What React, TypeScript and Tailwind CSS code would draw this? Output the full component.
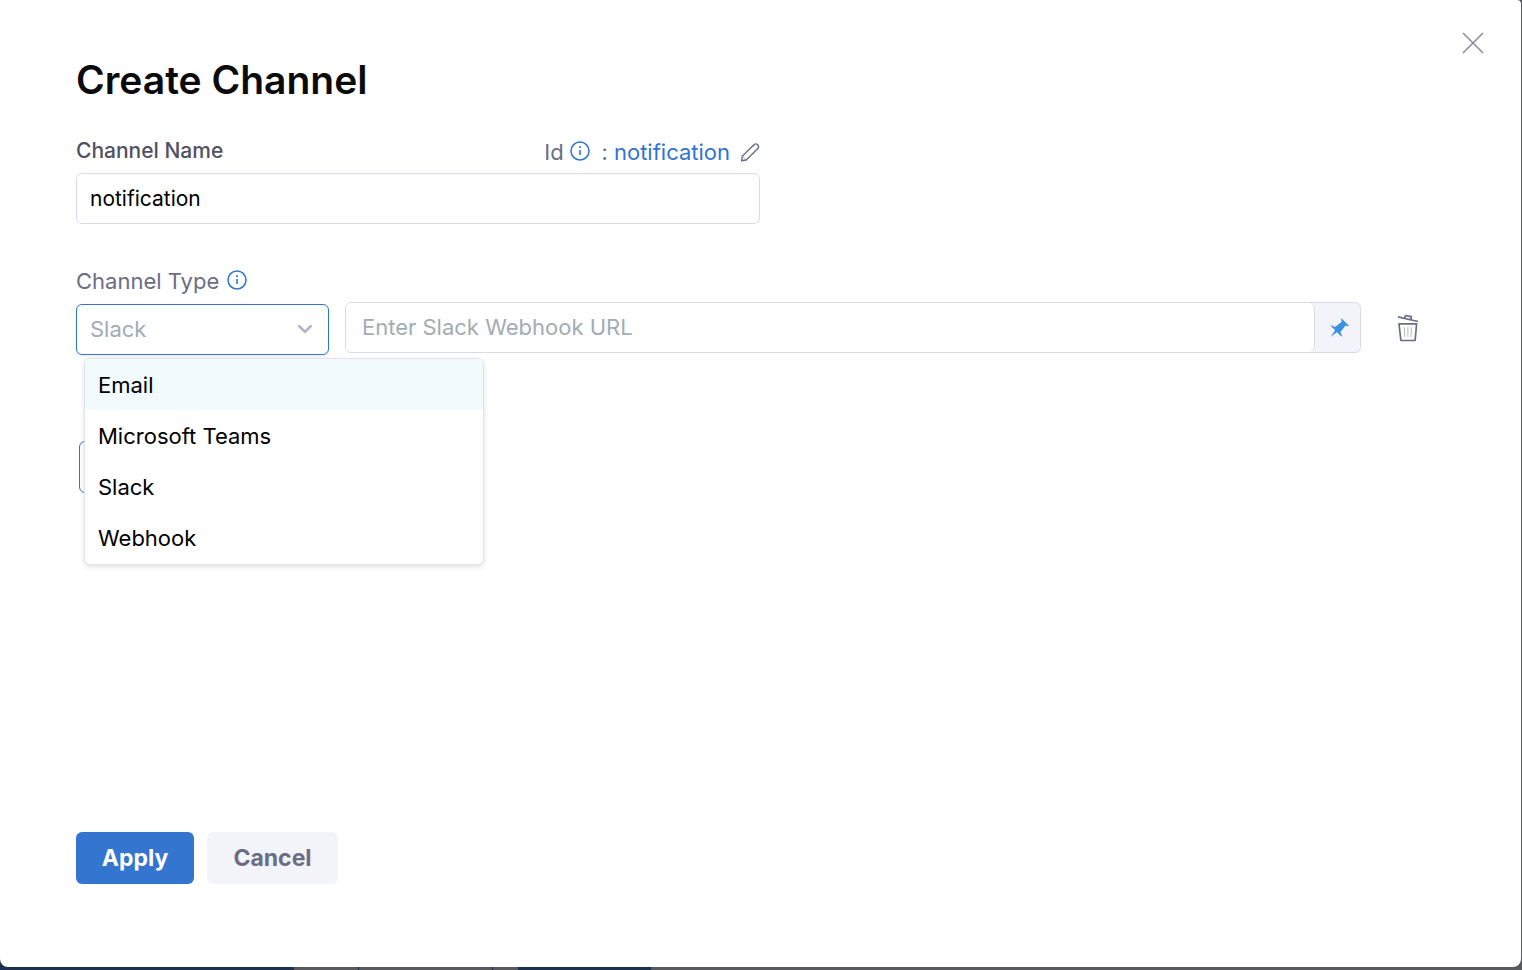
import { useState } from 'react';

const channelTypes = ['Email', 'Microsoft Teams', 'Slack', 'Webhook'];

function InfoIcon() {
  return (
    <svg viewBox="0 0 20 20" className="mb-0.5 size-5 shrink-0 text-[#2f74d0]" fill="none" stroke="currentColor" aria-hidden="true">
      <circle cx="10" cy="10" r="9" strokeWidth="1.5" />
      <path d="M10 9v5" strokeWidth="1.6" />
      <path d="M10 5.2v1.8" strokeWidth="1.8" />
    </svg>
  );
}

function PencilIcon() {
  return (
    <svg viewBox="0 0 20 20" className="size-5" fill="none" stroke="currentColor" strokeWidth="1.4" strokeLinejoin="round" aria-hidden="true">
      <path d="M1.6 18.8l.7-4.6L14.1 2.6a2.3 2.3 0 0 1 3.3 0l.5.5a2.3 2.3 0 0 1 0 3.3L6.2 18z" />
      <path d="M2.3 14.2l3.9 3.8" strokeWidth="0.5" />
      <path d="M13 5.2l1.9-1.8" strokeWidth="0.5" />
    </svg>
  );
}

function CloseIcon() {
  return (
    <svg viewBox="0 0 22 22" className="size-[22px]" fill="none" stroke="currentColor" strokeWidth="1.6" aria-hidden="true">
      <path d="M1 1l20 20M21 1L1 21" />
    </svg>
  );
}

function ChevronIcon() {
  return (
    <svg viewBox="0 0 16 10" className="pointer-events-none h-[10px] w-4 text-[#b0b1c4]" fill="none" stroke="currentColor" strokeWidth="2.6" strokeLinecap="round" strokeLinejoin="round" aria-hidden="true">
      <path d="M2.3 1.2L8 6.9 13.7 1.2" />
    </svg>
  );
}

function PinIcon() {
  return (
    <svg viewBox="0 0 16 16" className="size-[22px]" fill="currentColor" aria-hidden="true">
      <path d="M9.41.92c-.51.51-.41 1.5.15 2.56L4.34 7.54C2.8 6.48 1.45 6.05.92 6.58l3.54 3.54-3.54 4.95 4.95-3.54 3.54 3.54c.53-.53.1-1.88-.96-3.42l4.06-5.22c1.06.56 2.04.66 2.55.15L9.41.92z" transform="translate(0.3 0.2) scale(0.94)" />
    </svg>
  );
}

function TrashIcon() {
  return (
    <svg viewBox="0 0 22 28" className="h-7 w-[22px]" fill="none" stroke="currentColor" strokeWidth="1.7" strokeLinejoin="round" aria-hidden="true">
      <path d="M1 2.9l20 4.6" />
      <path d="M7.6 4.3l1-2.8 5.6 1.2-.1 2.9" />
      <path d="M2 9.9h17.6l-1.5 16.6H3.9z" />
      <path d="M7.3 13.2l.5 9.6M10.9 13.2v9.6M14.5 13.2l-.5 9.6" strokeWidth="1" opacity="0.5" />
    </svg>
  );
}

function PageBehind() {
  return (
    <div className="absolute inset-x-0 bottom-0 flex h-3" aria-hidden="true">
      <div className="w-[294px] bg-[#1b3050]" />
      <div className="w-16" />
      <div className="w-px bg-[#1b3050]" />
      <div className="w-[133px]" />
      <div className="w-px bg-[#1b3050]" />
      <div className="w-[25px]" />
      <div className="w-[133px] bg-[#1b3050]" />
    </div>
  );
}

export default function App() {
  const [name, setName] = useState('notification');
  const [type, setType] = useState('Slack');
  const [url, setUrl] = useState('');

  return (
    <div className="relative flex min-h-screen flex-col bg-[#58595b] pr-px pb-[3px] font-['Inter',sans-serif]">
      <PageBehind />
      <main className="relative flex flex-1 flex-col rounded-tr-sm rounded-b-lg bg-white px-[76px] pt-14 pb-[83px]">
        <button type="button" aria-label="Close" className="absolute top-8 right-[37px] text-[#8c8da3]">
          <CloseIcon />
        </button>

        <h1 className="text-[39px] leading-12 font-semibold text-[#0b0b0d]">Create Channel</h1>

        <section className="mt-8 w-full max-w-[684px]">
          <div className="flex h-8 items-start justify-between">
            <label htmlFor="channel-name" className="text-[21px] leading-[30px] font-medium text-[#4f5162]">
              Channel Name
            </label>
            <div className="flex items-center text-[22px] leading-8 text-[#6b6d85]">
              <span className="mr-1.5">Id</span>
              <InfoIcon />
              <span className="mr-1.5 ml-3">:</span>
              <span className="mr-2.5 text-[#2f74d0]">notification</span>
              <button type="button" aria-label="Edit id">
                <PencilIcon />
              </button>
            </div>
          </div>
          <input
            id="channel-name"
            value={name}
            onChange={(e) => setName(e.target.value)}
            className="mt-[5px] block h-[51px] w-full rounded-md border border-[#d9dae5] px-[13px] text-[21px] text-black outline-none"
          />
        </section>

        <section className="mt-[41px]">
          <div className="flex h-8 items-center gap-2">
            <label htmlFor="channel-type" className="text-[22px] leading-8 text-[#6b6d85]">
              Channel Type
            </label>
            <InfoIcon />
          </div>

          <div className="mt-[5px] flex items-start">
            <div className="relative mt-0.5">
              <div className="relative flex items-center">
                <select
                  id="channel-type"
                  value={type}
                  onChange={(e) => setType(e.target.value)}
                  className="h-[51px] w-[253px] appearance-none rounded-md border border-[#2f74d0] bg-white px-[13px] text-[22px] text-[#a1acb3] shadow-[0_2px_4px_rgba(40,41,61,0.08)] outline-none"
                >
                  {channelTypes.map((t) => (
                    <option key={t}>{t}</option>
                  ))}
                </select>
                <span className="pointer-events-none absolute right-4">
                  <ChevronIcon />
                </span>
              </div>
              <ul
                role="listbox"
                aria-label="Channel types"
                className="absolute top-full left-2 z-10 mt-[3px] w-[400px] overflow-hidden rounded-md border border-[#e3e4ea] bg-white pb-px shadow-[0_2px_5px_rgba(40,41,61,0.14)]"
              >
                {channelTypes.map((t) => (
                  <li
                    key={t}
                    role="option"
                    aria-selected={t === type}
                    onClick={() => setType(t)}
                    className="h-[51px] cursor-pointer px-[13px] text-[22px] leading-[52px] text-black first:bg-[#f1fafd]"
                  >
                    {t}
                  </li>
                ))}
              </ul>
            </div>

            <div className="ml-4 flex h-[51px] flex-1 overflow-hidden rounded-md border border-[#d9dae5] bg-[#f3f3fa]">
              <input
                aria-label="Slack Webhook URL"
                placeholder="Enter Slack Webhook URL"
                value={url}
                onChange={(e) => setUrl(e.target.value)}
                className="min-w-0 flex-1 rounded-r-md border-r border-[#d9dae5] bg-white px-4 text-[22px] text-black outline-none placeholder:text-[#a1acb3]"
              />
              <button type="button" aria-label="Input type" className="flex w-[45px] items-center justify-center pl-1 text-[#3d8fe0]">
                <PinIcon />
              </button>
            </div>

            <button type="button" aria-label="Delete" className="mr-[26px] ml-9 flex h-[51px] items-center text-[#6b6d85]">
              <TrashIcon />
            </button>
          </div>

          <button type="button" aria-label="Add channel" className="mt-[86px] ml-[3px] h-[52px] w-40 rounded-md border border-[#2f74d0]" />
        </section>

        <footer className="mt-auto flex gap-[13px] text-[23px] font-bold">
          <button type="button" className="h-[52px] w-[118px] rounded-md bg-[#3375cf] text-white">
            Apply
          </button>
          <button type="button" className="h-[52px] w-[131px] rounded-md bg-[#f3f3fa] text-[#6b6d85]">
            Cancel
          </button>
        </footer>
      </main>
    </div>
  );
}
